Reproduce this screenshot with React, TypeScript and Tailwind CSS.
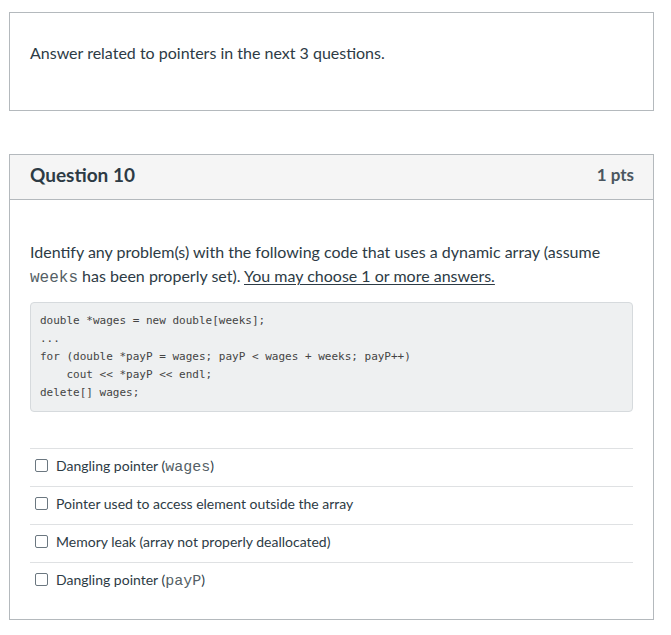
const answers: { text: string; code?: string }[] = [
  { text: "Dangling pointer (", code: "wages" },
  { text: "Pointer used to access element outside the array" },
  { text: "Memory leak (array not properly deallocated)" },
  { text: "Dangling pointer (", code: "payP" },
];

const codeLines = [
  "double *wages = new double[weeks];",
  "...",
  "for (double *payP = wages; payP < wages + weeks; payP++)",
  "    cout << *payP << endl;",
  "delete[] wages;",
];

export default function App() {
  return (
    <div className="min-h-[635px] bg-white pt-[12px] text-[#2d3b45] [font-family:Lato,'Liberation_Sans',sans-serif]">
      {/* intro box */}
      <div className="ml-[9px] mr-[17px] h-[99px] border border-[#b4b9bd] px-[20px] pt-[28px]">
        <p className="text-[16px] leading-[24px]">Answer related to pointers in the next 3 questions.</p>
      </div>

      {/* question card */}
      <div className="ml-[9px] mr-[17px] mt-[43px] border border-[#b4b9bd]">
        <div className="flex h-[45px] items-center justify-between border-b border-[#b4b9bd] bg-[#f5f5f5] pb-[4px] pl-[20px] pr-[19px]">
          <h2 className="text-[19px] font-bold leading-[24px]">Question 10</h2>
          <span className="text-[17px] font-bold text-[#4a5660]">1 pts</span>
        </div>

        <div className="px-[20px] pt-[40px] pb-[19px]">
          <p className="text-[16px] leading-[24px]">
            Identify any problem(s) with the following code that uses a dynamic array (assume{" "}
            <code className="font-['Liberation_Mono',monospace] text-[16px] leading-[16px] text-[#555f66]">weeks</code> has been properly set).{" "}
            <span className="underline underline-offset-2">You may choose 1 or more answers.</span>
          </p>

          <pre className="mt-[14px] rounded-[4px] border border-[#d6dadd] bg-[#eef0f1] px-[9px] py-[9px] font-['DejaVu_Sans_Mono',monospace] text-[11px] leading-[18px] text-[#444]">
            {codeLines.join("\n")}
          </pre>

          <div className="mt-[36px]">
            {answers.map((a, i) => (
              <div key={i} className="flex h-[38px] items-center border-t border-[#dfe1e3] pb-[5px] pl-[5px]">
                <span className="mr-[8px] h-[13px] w-[13px] rounded-[2px] border border-[#6b7780] bg-white" />
                <span className="text-[14px]">
                  {a.text}
                  {a.code && (
                    <>
                      <code className="font-['Liberation_Mono',monospace] text-[15px] leading-[14px] text-[#555f66]">{a.code}</code>)
                    </>
                  )}
                </span>
              </div>
            ))}
          </div>
        </div>
      </div>
    </div>
  );
}
